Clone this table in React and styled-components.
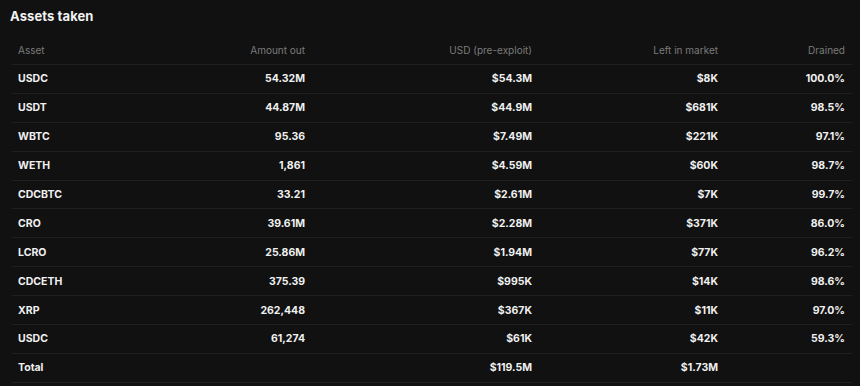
import React from "react";
import styled, { createGlobalStyle } from "styled-components";

const GlobalStyle = createGlobalStyle`
  html, body {
    margin: 0;
    padding: 0;
    background: #111111;
  }
  body {
    font-family: Inter, "Liberation Sans", Arial, sans-serif;
    -webkit-font-smoothing: antialiased;
  }
`;

const Panel = styled.section`
  width: 860px;
  height: 386px;
  background: #111111;
  padding: 8px 8px 0 12px;
  box-sizing: border-box;
  overflow: hidden;
`;

const Title = styled.h2`
  margin: 0 0 0 -2px;
  font-size: 13px;
  font-weight: 700;
  line-height: 16px;
  color: #f2f2f2;
  letter-spacing: 0.1px;
`;

const Table = styled.div`
  margin-top: 12px;
  width: 840px;
`;

const Row = styled.div`
  display: grid;
  grid-template-columns: 138px 162px 227px 186px 127px;
  align-items: center;
  height: ${(p) => (p.$head ? "29px" : "28.9px")};
  box-sizing: border-box;
  border-bottom: 1px solid #1f1f1f;
`;

const Cell = styled.div`
  padding: 0 7px 0 6px;
  text-align: ${(p) => (p.$left ? "left" : "right")};
  font-size: ${(p) => (p.$head ? "10px" : "10.5px")};
  font-weight: ${(p) => (p.$head ? 400 : 700)};
  color: ${(p) => (p.$head ? "#7b7b7b" : "#f0f0f0")};
  white-space: nowrap;
`;

const headers = ["Asset", "Amount out", "USD (pre-exploit)", "Left in market", "Drained"];

const rows = [
  ["USDC", "54.32M", "$54.3M", "$8K", "100.0%"],
  ["USDT", "44.87M", "$44.9M", "$681K", "98.5%"],
  ["WBTC", "95.36", "$7.49M", "$221K", "97.1%"],
  ["WETH", "1,861", "$4.59M", "$60K", "98.7%"],
  ["CDCBTC", "33.21", "$2.61M", "$7K", "99.7%"],
  ["CRO", "39.61M", "$2.28M", "$371K", "86.0%"],
  ["LCRO", "25.86M", "$1.94M", "$77K", "96.2%"],
  ["CDCETH", "375.39", "$995K", "$14K", "98.6%"],
  ["XRP", "262,448", "$367K", "$11K", "97.0%"],
  ["USDC", "61,274", "$61K", "$42K", "59.3%"],
  ["Total", "", "$119.5M", "$1.73M", ""],
];

export default function App() {
  return (
    <>
      <GlobalStyle />
      <Panel>
        <Title>Assets taken</Title>
        <Table>
          <Row $head>
            {headers.map((h, i) => (
              <Cell key={h} $head $left={i === 0}>
                {h}
              </Cell>
            ))}
          </Row>
          {rows.map((r, ri) => (
            <Row key={ri}>
              {r.map((v, i) => (
                <Cell key={i} $left={i === 0}>
                  {v}
                </Cell>
              ))}
            </Row>
          ))}
        </Table>
      </Panel>
    </>
  );
}
